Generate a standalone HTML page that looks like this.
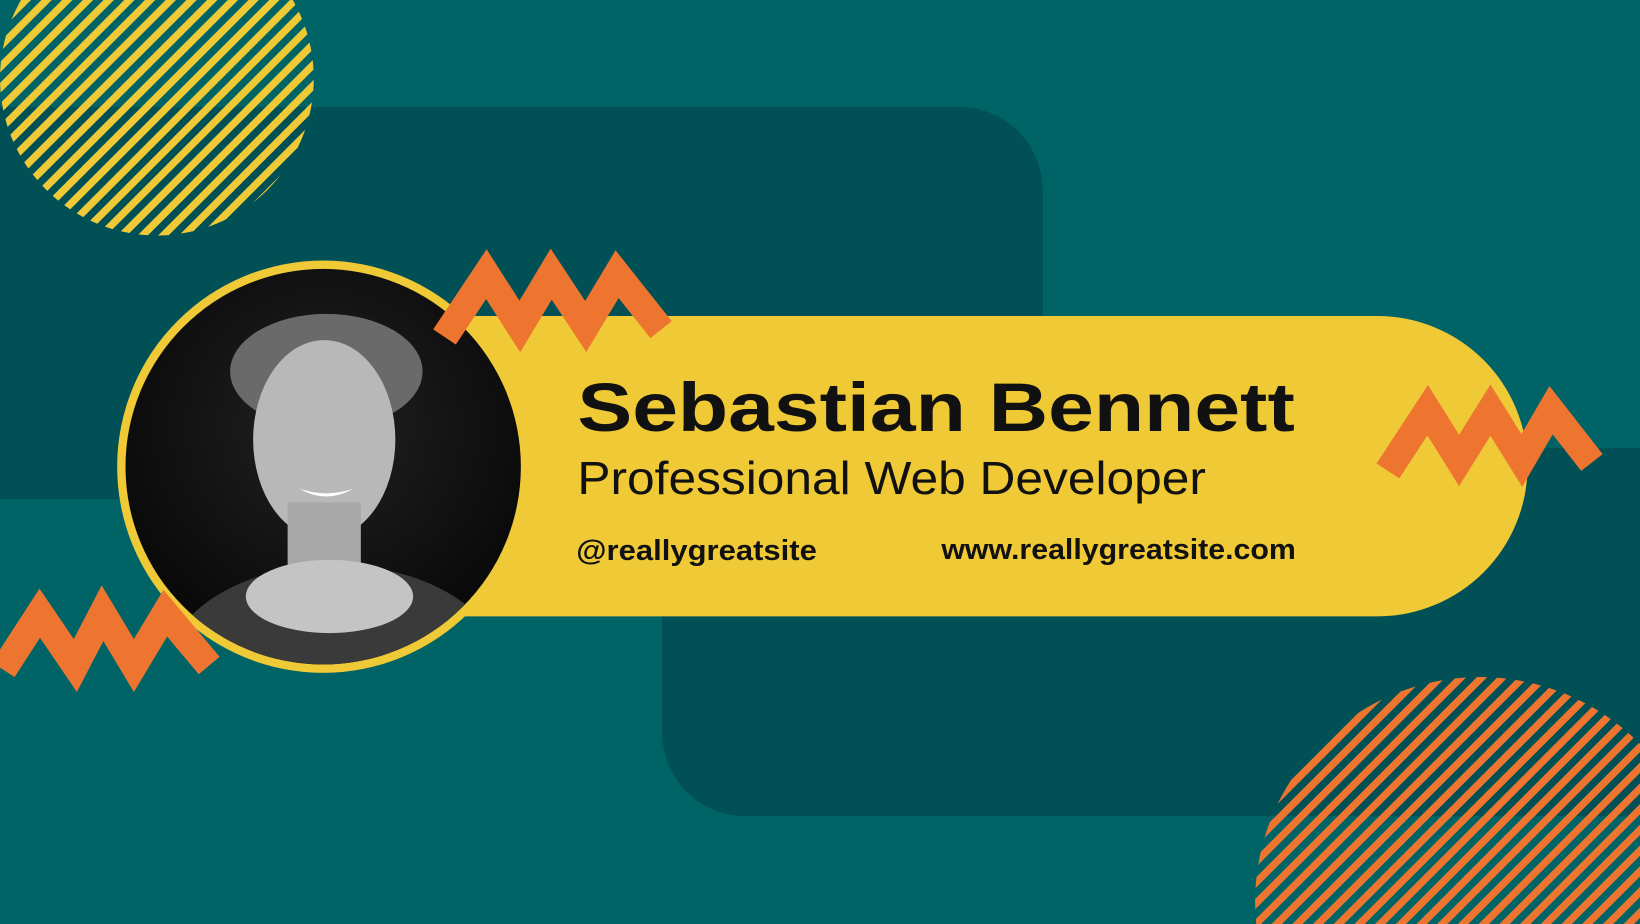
<!DOCTYPE html>
<html><head><meta charset="utf-8"><style>html,body{margin:0;padding:0;width:1640px;height:924px;overflow:hidden;background:#006466}svg{display:block;position:absolute;left:0;top:0}</style></head>
<body>
<svg width="1640" height="924" viewBox="0 0 1568 883" preserveAspectRatio="none" xmlns="http://www.w3.org/2000/svg">
<defs>
<pattern id="sy" width="14" height="14" patternUnits="userSpaceOnUse" patternTransform="rotate(45)">
<rect width="7" height="14" fill="#EFC936"/></pattern>
<pattern id="so" width="14" height="14" patternUnits="userSpaceOnUse" patternTransform="rotate(45)">
<rect width="7" height="14" fill="#EE7530"/></pattern>
<clipPath id="pc"><circle cx="309" cy="446" r="189"/></clipPath>
<radialGradient id="bg" cx="0.5" cy="0.4" r="0.6"><stop offset="0" stop-color="#222"/><stop offset="1" stop-color="#050505"/></radialGradient>
</defs>
<rect width="1568" height="883" fill="#006466"/>
<rect x="-100" y="102" width="1097" height="375" rx="80" fill="#005055"/>
<rect x="633" y="428" width="1100" height="352" rx="80" fill="#005055"/>
<circle cx="150" cy="75" r="150" fill="url(#sy)"/>
<circle cx="1415" cy="862" r="215" fill="url(#so)"/>
<path d="M440 302 H1317 A143.5 143.5 0 0 1 1317 589 H440 Z" fill="#EFC936"/>
<circle cx="309" cy="446" r="197" fill="#EFC936"/>
<g clip-path="url(#pc)">
<rect x="100" y="240" width="420" height="420" fill="url(#bg)"/>
<ellipse cx="312" cy="355" rx="92" ry="55" fill="#6a6a6a"/>
<ellipse cx="310" cy="420" rx="68" ry="95" fill="#b8b8b8"/>
<rect x="275" y="480" width="70" height="80" fill="#a8a8a8"/>
<ellipse cx="320" cy="640" rx="160" ry="100" fill="#3a3a3a"/>
<ellipse cx="315" cy="570" rx="80" ry="35" fill="#c4c4c4"/>
<path d="M286 467 Q312 482 338 467 Q312 476 286 467Z" fill="#fff"/>
</g>
<g fill="none" stroke="#EE7530" stroke-width="26" stroke-linejoin="miter" stroke-miterlimit="10">
<polyline points="425,322 465,262 497,312 527,262 560,312 590,262 632,315"/>
<polyline points="3,640 38,586 72,636 98,586 128,636 158,586 200,636"/>
<polyline points="1327,450 1365,392 1395,440 1425,392 1455,440 1483,392 1522,442"/>
</g>
<g font-family="Liberation Sans, sans-serif" fill="#111">
<text x="552" y="412" font-size="66" font-weight="bold" textLength="686" lengthAdjust="spacingAndGlyphs">Sebastian Bennett</text>
<text x="552" y="472" font-size="44" textLength="601" lengthAdjust="spacingAndGlyphs">Professional Web Developer</text>
<text x="551" y="535" font-size="27" font-weight="bold" textLength="230" lengthAdjust="spacingAndGlyphs">@reallygreatsite</text>
<text x="900" y="534" font-size="27" font-weight="bold" textLength="339" lengthAdjust="spacingAndGlyphs">www.reallygreatsite.com</text>
</g>
</svg>
</body></html>
